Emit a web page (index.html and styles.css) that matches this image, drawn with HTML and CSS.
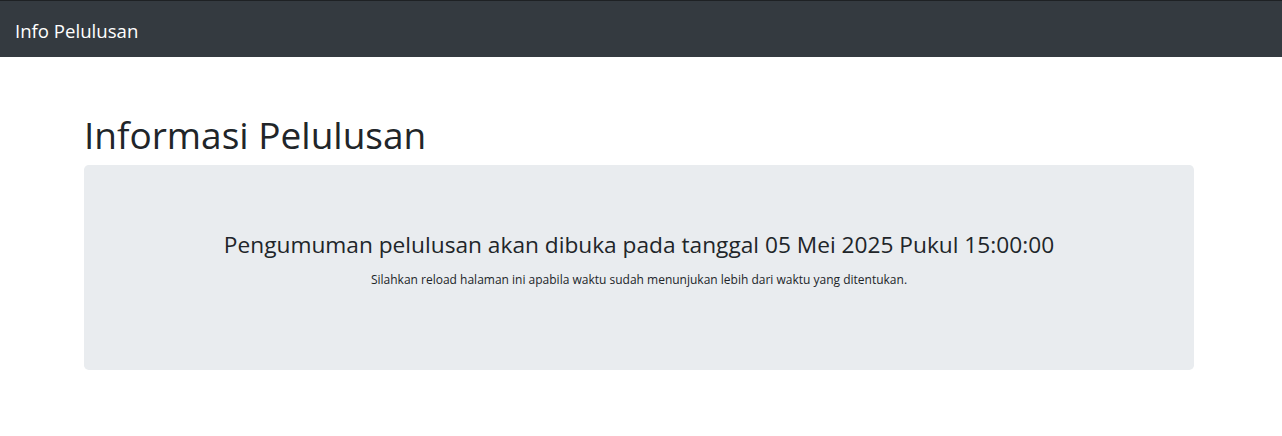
FILE: index.html
```html
<!DOCTYPE html>
<html lang="id">
<head>
<meta charset="utf-8">
<title>Info Pelulusan</title>
<link rel="stylesheet" href="styles.css">
</head>
<body>
<nav class="navbar">
  <a class="brand" href="#">Info Pelulusan</a>
</nav>
<main class="container">
  <h1 class="title">Informasi Pelulusan</h1>
  <section class="jumbotron">
    <h4 class="notice">Pengumuman pelulusan akan dibuka pada tanggal 05 Mei 2025 Pukul 15:00:00</h4>
    <p class="hint">Silahkan reload halaman ini apabila waktu sudah menunjukan lebih dari waktu yang ditentukan.</p>
  </section>
</main>
</body>
</html>
```

FILE: styles.css
```css
* { box-sizing: border-box; }
html, body {
  margin: 0;
  padding: 0;
  background: #fff;
  color: #212529;
  font-family: "Open Sans", "Noto Sans", sans-serif;
}
.navbar {
  height: 57px;
  background: #343a40;
  border-top: 1px solid #1e2124;
  display: flex;
  align-items: center;
  padding: 4px 15px 0;
}
.brand {
  color: #fff;
  text-decoration: none;
  font-size: 18.6px;
  line-height: 1;
}
.container {
  width: 1110px;
  margin-left: 84px;
  padding-top: 56px;
}
.title {
  margin: 0 0 8px 0;
  font-weight: 400;
  font-size: 37px;
  line-height: 44px;
}
.jumbotron {
  background: #e9ecef;
  border-radius: 4.8px;
  padding: 66px 32px 62px;
  height: 205px;
  text-align: center;
}
.notice {
  margin: 0 0 13px 0;
  font-weight: 400;
  font-size: 22.7px;
  line-height: 1.2;
}
.hint {
  margin: 0;
  font-size: 12px;
  line-height: 1.5;
}
```
